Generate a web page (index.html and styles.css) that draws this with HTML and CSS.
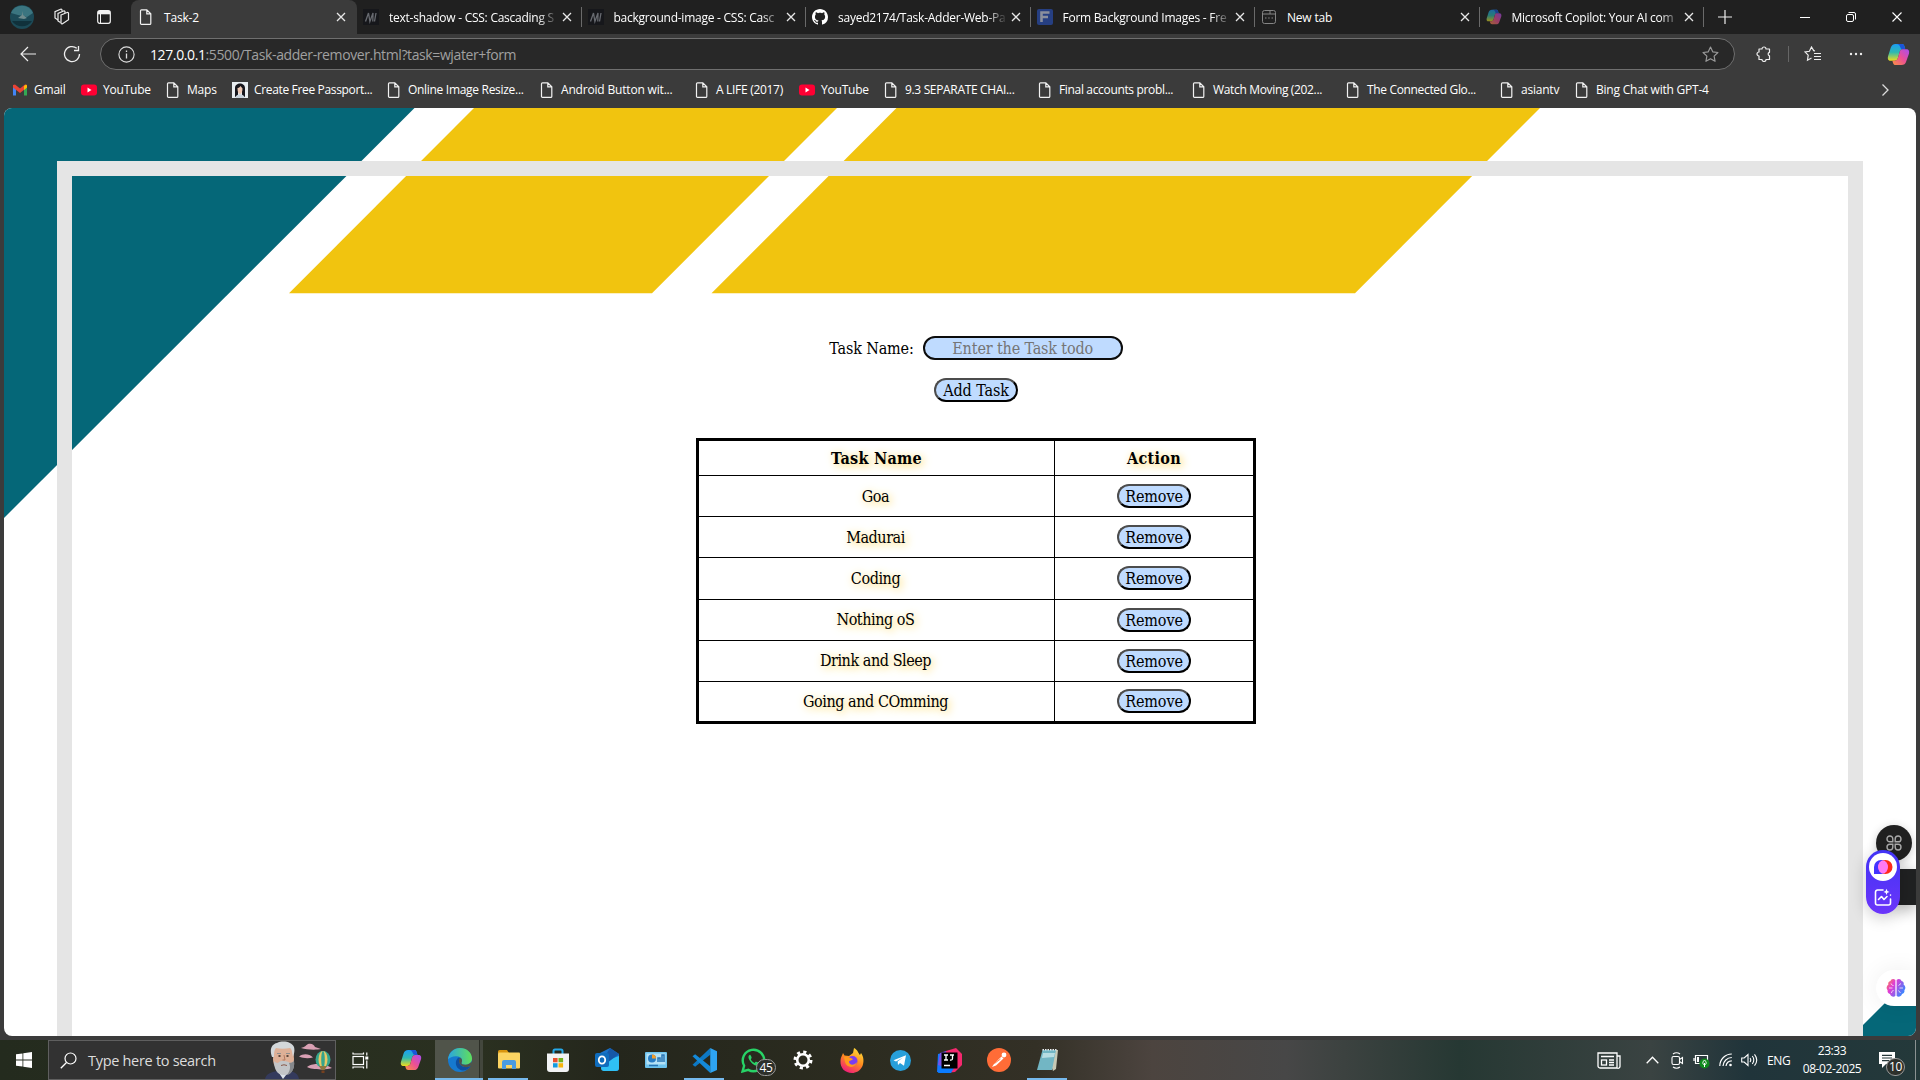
FILE: index.html
```html
<!DOCTYPE html>
<html lang="en">
<head>
<meta charset="utf-8">
<title>Task-2</title>
<link rel="stylesheet" href="styles.css">
</head>
<body>
<svg class="defs" width="0" height="0">
  <defs>
    <linearGradient id="cpA" x1="0" y1="0" x2="0" y2="1"><stop offset="0" stop-color="#1b9df5"/><stop offset=".5" stop-color="#2fb9b0"/><stop offset="1" stop-color="#f0dc1c"/></linearGradient>
    <linearGradient id="cpB" x1="1" y1="0" x2="0" y2="1"><stop offset="0" stop-color="#a84df0"/><stop offset=".5" stop-color="#ec4f95"/><stop offset="1" stop-color="#fb9140"/></linearGradient>
    <linearGradient id="edgeTop" x1="0" y1="0" x2="1" y2="0"><stop offset="0" stop-color="#2aa5e0"/><stop offset="1" stop-color="#61e05a"/></linearGradient>
    <linearGradient id="ffx" x1=".8" y1="0" x2=".3" y2="1"><stop offset="0" stop-color="#ffe23a"/><stop offset=".5" stop-color="#ff8a1e"/><stop offset="1" stop-color="#f0197c"/></linearGradient>
    <linearGradient id="brainFill" x1="0" y1="0" x2="1" y2=".6"><stop offset="0" stop-color="#ff8a3c"/><stop offset=".4" stop-color="#e13ad6"/><stop offset="1" stop-color="#3a86ff"/></linearGradient>
    <symbol id="doc" viewBox="0 0 16 16"><path d="M3.500.8h5.300l4 4v9.600a1 1 0 0 1-1 1H3.500a1 1 0 0 1-1-1V1.800a1 1 0 0 1 1-1zM8.800.8v4h4" fill="none" stroke="#f2f2f2" stroke-width="1.200"/></symbol>
    <symbol id="x" viewBox="0 0 10 10"><path d="M1 1l8 8M9 1L1 9" stroke="#e8e8e8" stroke-width="1.300"/></symbol>
    <symbol id="mdn" viewBox="0 0 16 16"><rect width="16" height="16" fill="#16171b"/><path d="M2.500 12.500L5.500 4l1.400 8.500L10 4l-.2 8.500M13 4l-1.500 8.500" fill="none" stroke="#686b71" stroke-width="1.300"/></symbol>
    <symbol id="yt" viewBox="0 0 16 16"><rect y="2.500" width="16" height="11" rx="3" fill="#ff0033"/><path d="M6.500 5.500v5L10.500 8z" fill="#fff"/></symbol>
    <symbol id="copilot" viewBox="0 0 24 24"><path d="M9 1h6.500c1.600 0 2.200.9 2.600 2.200l1 3.300h-2.600c-1.900 0-2.800 1-3.300 2.800l-1.700 6.200c-.6 2-1.700 3-3.500 3H4c-2.900 0-3.600-2.200-2.900-4.700L3.900 5C4.700 2.300 6.300 1 9 1z" fill="url(#cpA)"/><path d="M9.500 1h6c1.600 0 2.200.9 2.600 2.200l1 3.300h-2.600c-1.200 0-2-.3-2.500-1.800C13.300 2.600 12.500 1 9.500 1z" fill="#1a54d8"/><path d="M15 23H9c-1.600 0-2.300-.9-2.700-2.200l-.7-2.300H8c1.800 0 2.900-1 3.500-3l1.700-6.200c.5-1.800 1.400-2.800 3.300-2.800H20c2.900 0 3.600 2.200 2.900 4.700L20.100 19c-.8 2.700-2.400 4-5.100 4z" fill="url(#cpB)"/></symbol>
    <symbol id="star" viewBox="0 0 16 16"><path d="M8 1l2.100 4.500 4.900.6-3.600 3.400.9 4.900L8 12l-4.300 2.400.9-4.900L1 6.100l4.900-.6z" fill="none" stroke="currentColor" stroke-width="1.100" stroke-linejoin="round"/></symbol>
  </defs>
</svg>

<div class="screen">
  <header class="tabbar">
    <div class="tabtools">
      <svg width="24" height="24" viewBox="0 0 24 24"><circle cx="12" cy="12" r="12" fill="#1c4a57"/><path d="M1 8a12 12 0 0 1 22 0l-6 4-9-2z" fill="#3b7580"/><path d="M8 13l4-3 0-4 1 4 4 3-3 1z" fill="#708c8e"/><path d="M2 16h20a12 12 0 0 1-20 0z" fill="#10313b"/></svg>
      <svg width="18" height="18" viewBox="0 0 18 18" fill="none" stroke="#eee" stroke-width="1.200"><path d="M8 7l6-2.500a1 1 0 0 1 1.500.8v6.500l-6 4a1 1 0 0 1-1.500-.8z"/><path d="M12 5V3.800a1 1 0 0 0-1.400-.8L5 5.500V13l2.500 1.500"/><path d="M9 3V2a1 1 0 0 0-1.400-.8L2 3.600V10l3 2"/></svg>
      <svg width="16" height="16" viewBox="0 0 16 16"><rect x="1.700" y="1.700" width="12.600" height="12.600" rx="2" fill="none" stroke="#f2f2f2" stroke-width="1.200"/><path d="M2 2h12v3.300H2z" fill="#f2f2f2"/><path d="M4.500 5v9" stroke="#f2f2f2"/></svg>
    </div>
    <div class="tab active"><svg class="fav"><use href="#doc"/></svg><span>Task-2</span><svg class="cls"><use href="#x"/></svg></div>
    <div class="tab fade"><svg class="fav"><use href="#mdn"/></svg><span>text-shadow - CSS: Cascading S</span><svg class="cls"><use href="#x"/></svg></div>
    <div class="tab fade"><svg class="fav"><use href="#mdn"/></svg><span>background-image - CSS: Casc</span><svg class="cls"><use href="#x"/></svg></div>
    <div class="tab fade"><svg class="fav" viewBox="0 0 16 16"><path fill="#fff" d="M8 0C3.580 0 0 3.580 0 8c0 3.540 2.290 6.530 5.470 7.590.4.070.55-.17.55-.38 0-.19-.01-.82-.01-1.490-2.010.37-2.530-.49-2.690-.94-.09-.23-.48-.94-.82-1.130-.28-.15-.68-.52-.01-.53.63-.01 1.080.58 1.230.82.72 1.210 1.870.87 2.330.66.07-.52.28-.87.51-1.070-1.780-.2-3.640-.89-3.640-3.950 0-.87.31-1.590.82-2.150-.08-.2-.36-1.020.08-2.120 0 0 .67-.21 2.200.82.64-.18 1.320-.27 2-.27s1.360.09 2 .27c1.530-1.040 2.200-.82 2.200-.82.44 1.100.16 1.920.08 2.120.51.56.82 1.270.82 2.150 0 3.070-1.870 3.750-3.650 3.950.29.25.54.73.54 1.480 0 1.070-.01 1.930-.01 2.200 0 .21.15.46.55.38A8.010 8.010 0 0 0 16 8c0-4.420-3.580-8-8-8z"/></svg><span>sayed2174/Task-Adder-Web-Pa</span><svg class="cls"><use href="#x"/></svg></div>
    <div class="tab fade"><svg class="fav" viewBox="0 0 16 16"><rect width="16" height="16" rx="2" fill="#263f82"/><path d="M4.500 13V3.500h8M4.500 8H11" stroke="#8a8f9d" stroke-width="2.600" fill="none"/></svg><span>Form Background Images - Fre</span><svg class="cls"><use href="#x"/></svg></div>
    <div class="tab"><svg class="fav" viewBox="0 0 16 16" fill="none" stroke="#858585"><rect x="1.500" y="1.500" width="13" height="13" rx="2"/><path d="M1.500 5h13M9 1.500V5M4 9h1.500M7.200 9h1.500M10.500 9H12"/></svg><span>New tab</span><svg class="cls"><use href="#x"/></svg></div>
    <div class="tab fade"><svg class="fav dim"><use href="#copilot"/></svg><span>Microsoft Copilot: Your AI com</span><svg class="cls"><use href="#x"/></svg></div>
    <svg class="plus" width="14" height="14" viewBox="0 0 14 14"><path d="M7 0v14M0 7h14" stroke="#eee" stroke-width="1.200"/></svg>
    <div class="winctl">
      <svg width="10" height="10" viewBox="0 0 10 10"><path d="M0 5.500h10" stroke="#fff"/></svg>
      <svg width="10" height="10" viewBox="0 0 10 10" fill="none" stroke="#fff"><rect x=".5" y="2.500" width="7" height="7" rx="1.500"/><path d="M2.500.5H8A1.500 1.500 0 0 1 9.500 2v5.500"/></svg>
      <svg width="10" height="10" viewBox="0 0 10 10"><path d="M.5.5l9 9M9.500.5l-9 9" stroke="#fff" stroke-width="1.100"/></svg>
    </div>
  </header>

  <div class="toolbar">
    <svg class="back" width="16" height="16" viewBox="0 0 16 16"><path d="M8 1L1 8l7 7M1 8h15" fill="none" stroke="#eee" stroke-width="1.200"/></svg>
    <svg class="reload" width="18" height="18" viewBox="0 0 18 18"><path d="M16.500 9A7.500 7.500 0 1 1 13.800 3.300M15.500 1v4.500H11" fill="none" stroke="#eee" stroke-width="1.300"/></svg>
    <div class="address">
      <svg width="17" height="17" viewBox="0 0 17 17"><circle cx="8.500" cy="8.500" r="7.600" fill="none" stroke="#ddd" stroke-width="1.100"/><path d="M8.500 7.500V12.500M8.500 4.500v1.600" stroke="#ddd" stroke-width="1.300"/></svg>
      <span class="url"><b>127.0.0.1</b>:5500/Task-adder-remover.html?task=wjater+form</span>
      <svg class="addstar" width="17" height="17"><use href="#star"/></svg>
    </div>
    <div class="actions">
      <svg width="16" height="16" viewBox="0 0 16 16"><path d="M3 3h3a2 2 0 0 1 4 0h3.500v3.300a1.800 1.800 0 0 0 0 3.500V13.500H10a2 2 0 0 1-4 0H3V10a2 2 0 0 1 0-4z" fill="none" stroke="#eee" stroke-width="1.200" stroke-linejoin="round"/></svg>
      <i></i>
      <svg width="17" height="16" viewBox="0 0 17 16"><path d="M11 4.800L9.700 4.600 7.500 1 5.400 5.300 1 6l3.200 3.200-.7 5 4-2.200M10 7.500h7M10 10.500h7M10 13.500h7" fill="none" stroke="#eee" stroke-width="1.200"/></svg>
      <svg width="14" height="4" viewBox="0 0 14 4"><circle cx="2" cy="2" r="1.200" fill="#eee"/><circle cx="7" cy="2" r="1.200" fill="#eee"/><circle cx="12" cy="2" r="1.200" fill="#eee"/></svg>
      <svg width="23" height="23"><use href="#copilot"/></svg>
    </div>
  </div>

  <nav class="bookmarks">
    <a class="w69"><svg class="fav" viewBox="0 0 16 16"><path d="M1 13.500V4l3 2v7.500z" fill="#4285f4"/><path d="M12 13.500V6l3-2v9.500z" fill="#34a853"/><path d="M1 3l2-.5 5 4 5-4L15 3v2.500L8 11 1 5.500z" fill="#ea4335"/><path d="M12 4l2-1.500 1 1v2L12 8z" fill="#fbbc04"/></svg>Gmail</a>
    <a class="w84"><svg class="fav"><use href="#yt"/></svg>YouTube</a>
    <a class="w67"><svg class="fav"><use href="#doc"/></svg>Maps</a>
    <a class="w154"><svg class="fav" viewBox="0 0 16 16"><rect width="16" height="16" fill="#e8edf0"/><path d="M3 15V6c0-6 10-6 10 0v9l-3-1V6H6v8z" fill="#16161c"/><path d="M5.500 6c2 0 3-2 3-2l2 2.500C10.500 10 9.500 12 8 12s-2.500-2-2.500-6z" fill="#efc9b4"/><path d="M3.500 16c0-5 9-5 9 0z" fill="#c9d3dc"/></svg>Create Free Passport...</a>
    <a class="w153"><svg class="fav"><use href="#doc"/></svg>Online Image Resize...</a>
    <a class="w155"><svg class="fav"><use href="#doc"/></svg>Android Button wit...</a>
    <a class="w105"><svg class="fav"><use href="#doc"/></svg>A LIFE (2017)</a>
    <a class="w84"><svg class="fav"><use href="#yt"/></svg>YouTube</a>
    <a class="w154"><svg class="fav"><use href="#doc"/></svg>9.3 SEPARATE CHAI...</a>
    <a class="w154"><svg class="fav"><use href="#doc"/></svg>Final accounts probl...</a>
    <a class="w154"><svg class="fav"><use href="#doc"/></svg>Watch Moving (202...</a>
    <a class="w154"><svg class="fav"><use href="#doc"/></svg>The Connected Glo...</a>
    <a class="w75"><svg class="fav"><use href="#doc"/></svg>asiantv</a>
    <a><svg class="fav"><use href="#doc"/></svg>Bing Chat with GPT-4</a>
    <svg class="more" width="8" height="12" viewBox="0 0 8 12"><path d="M1.500.5L7 6l-5.500 5.500" fill="none" stroke="#ddd" stroke-width="1.300"/></svg>
  </nav>

  <main class="page">
    <svg class="backdrop" width="1912" height="928" viewBox="4 108 1912 928">
      <path d="M4 108H414.500L4 518z" fill="#056778"/>
      <path d="M474 108H837L652 293.300H289z" fill="#f1c40f"/>
      <path d="M896.500 108H1540L1355 293.300H711.500z" fill="#f1c40f"/>
      <path d="M1852 1036L1916 972V1036z" fill="#056778"/>
    </svg>
    <div class="frame">
      <form class="entry">
        <div class="row"><label for="task">Task Name:</label><input id="task" type="text" placeholder="Enter the Task todo"></div>
        <button class="btn add" type="button">Add Task</button>
      </form>
      <table class="tasks">
        <tr><th class="name">Task Name</th><th>Action</th></tr>
        <tr><td>Goa</td><td><button class="btn">Remove</button></td></tr>
        <tr><td>Madurai</td><td><button class="btn">Remove</button></td></tr>
        <tr><td>Coding</td><td><button class="btn">Remove</button></td></tr>
        <tr><td>Nothing oS</td><td><button class="btn">Remove</button></td></tr>
        <tr><td>Drink and Sleep</td><td><button class="btn">Remove</button></td></tr>
        <tr><td>Going and COmming</td><td><button class="btn">Remove</button></td></tr>
      </table>
    </div>

    <div class="ext-circle"><svg width="16" height="16" viewBox="0 0 16 16" fill="none" stroke="#a9a9a9" stroke-width="1.400"><path d="M6.800 6.800H3.900A2.900 2.900 0 1 1 6.800 3.900zM9.200 6.800h2.900A2.900 2.900 0 1 0 9.200 3.900zM6.800 9.200H3.900A2.900 2.900 0 1 0 6.800 12.100zM9.200 9.200h2.900A2.900 2.900 0 1 1 9.200 12.100z"/></svg></div>
    <div class="ext-bar"></div>
    <div class="ext-pill">
      <svg width="28" height="28" viewBox="0 0 28 28"><circle cx="14" cy="14" r="14" fill="#fff"/><path d="M5 21v-7a7 7 0 1 1 7 7z" fill="#4433ff"/><circle cx="16.500" cy="14" r="7" fill="#ff2a1a"/><ellipse cx="14" cy="14" rx="5" ry="6.500" fill="#ff7af5"/></svg>
      <svg width="18" height="18" viewBox="0 0 18 18" fill="none" stroke="#fff" stroke-width="1.600" stroke-linecap="round" stroke-linejoin="round"><path d="M9 2H3.500A2 2 0 0 0 1.500 4v11a2 2 0 0 0 2 2h11a2 2 0 0 0 2-2v-4M4.500 11.500l3-3 2.500 3 3-3"/><path d="M12.500.8l.9 2.200 2.200.9-2.200.9-.9 2.200-.9-2.200-2.200-.9 2.200-.9z" fill="#fff" stroke="none"/><path d="M16.500 7v.1"/></svg>
    </div>
    <div class="ext-brain"><svg width="20" height="20" viewBox="0 0 20 20"><path d="M9.400 2C7.500.2 5 1 4.500 3 2.600 3.300 1.800 5 2.400 6.600.4 7.800 0 10.600 1.600 12.300c-.4 2 .8 3.500 2.400 3.700.8 2.800 4 3.500 5.400 1.800zM10.600 2c1.900-1.800 4.400-1 4.900 1 1.900.3 2.700 2 2.100 3.600 2 1.200 2.400 4 .8 5.700.4 2-.8 3.500-2.400 3.700-.8 2.800-4 3.500-5.400 1.800z" fill="url(#brainFill)"/><path d="M3 10h3.500M5 5.500c.4 1.300 1.300 2 2.500 2M5.500 15c0-1.500.8-2.300 2-2.500M17 10h-3.500M15 5.500l-2.500 2M14.500 15l-2-2.500" fill="none" stroke="#ffffffbb" stroke-width="1"/></svg></div>
  </main>

  <footer class="taskbar">
    <div class="cell start"><svg width="16" height="16" viewBox="0 0 16 16"><path d="M0 2.300L6.500 1.400V7.600H0zM7.300 1.300L16 0v7.600H7.300zM0 8.400h6.500v6.200L0 13.700zM7.300 8.400H16V16l-8.700-1.300z" fill="#fff"/></svg></div>
    <div class="search">
      <svg width="17" height="17" viewBox="0 0 17 17"><circle cx="10.500" cy="6.500" r="5.500" fill="none" stroke="#fff" stroke-width="1.200"/><path d="M6.500 10.500L.8 16.200" stroke="#fff" stroke-width="1.300"/></svg>
      <span>Type here to search</span>
      <svg class="art" width="70" height="38" viewBox="0 0 70 38">
        <path d="M0 38c1-5 6-7 12-8h13c5 1 8 3 9 8z" fill="#343a5c"/><path d="M12 29l6 9 7-9z" fill="#dde3ea"/>
        <path d="M9 6h19l1 12c0 8-4 12-10 12S8 26 8 18z" fill="#deb097"/>
        <path d="M7 16C4 8 7 3 12 2c6-3 15-1 17 4 1 4 0 7-1 10-1-5-1-8-3-9-5 1-10 1-14 0-2 2-2 5-2 9z" fill="#d3d7da"/>
        <path d="M9 20c1 1 2 2 4 2 2-2 4-2.500 6-2s4 0 6 2c2 0 3-1 4-2 1 8-3 14-10 14S9 28 9 20z" fill="#c3c5c7"/><path d="M24 22c2 0 4-1 5-2 1 7-2 13-7 14 3-4 4-8 2-12z" fill="#85888c"/><path d="M16 24.500q3-1.500 6 0" stroke="#8a5a4a" fill="none"/>
        <path d="M12 12.500h4M21 12.500h4" stroke="#8f8f8f" stroke-width="1.200"/><path d="M13.500 15h2M21.500 15h2" stroke="#33241f" stroke-width="1.600"/><path d="M19 14l1 5h-2.500" stroke="#b5795e" fill="none"/>
        <path d="M36 7c4-1 4-2 7-4 4-1 6 1 7 3l6 2c-4 1-14 1-20-1zM34 15.500c4-3 10-3 14 1-4 1-10 1-14-1zM42 26c4-3 8-3 11-3h6l8 4c-4 2-21 2-25-1z" fill="#d9a0b4"/>
        <ellipse cx="58" cy="18.500" rx="7.500" ry="8.500" fill="#35a58d"/><ellipse cx="58" cy="18.500" rx="4.500" ry="8.500" fill="#e7c765"/><ellipse cx="58" cy="18.500" rx="1.800" ry="8.500" fill="#35a58d"/><path d="M54 25l2.500 4h3l2.500-4z" fill="#8d7740"/><path d="M56.500 29.500h3v2.500h-3z" fill="#76401f"/>
      </svg>
    </div>
    <div class="apps">
      <div class="cell"><svg width="17" height="17" viewBox="0 0 17 17" fill="none" stroke="#fff" stroke-width="1.200"><rect x="1" y="4.500" width="10.500" height="8"/><path d="M1 .5V2h10.500V.5M1 16.500V15h10.500v1.500M14.800.5v3M14.800 8.500v8"/><path d="M13.300 4.500h3v3h-3z" fill="#fff" stroke="none"/></svg></div>
      <div class="cell"><svg width="22" height="22"><use href="#copilot"/></svg></div>
      <div class="cell on"><svg width="24" height="24" viewBox="0 0 24 24"><circle cx="12" cy="12" r="12" fill="#1679cf"/><path d="M0 11.500C.6 4.500 6 0 12 0c7 0 12 5 12 10.500 0 4-3 6.300-6.800 6.300-2.700 0-4.200-1-3.600-2.300 1.400-2.500 0-6-5-6.300C4.800 8 1.500 9.300 0 11.500z" fill="url(#edgeTop)"/><path d="M10.500 9.500c-4 3-3.500 10 2 12.500 4 1.600 8-.4 10.300-4-3.500 1.800-8.300 1.500-10.600-1.500C10.500 14 10.500 11.500 12.500 10z" fill="#0f4f9f"/><path d="M12.300 9.800c2 1.200 2.100 3.200 1.300 4.700-.6 1.300.9 2.300 3.600 2.300 2.800 0 5.300-1.400 6.300-3.600l.5 3-1.300 1.900c-3.500 1.800-8.200 1.400-10.500-1.600-1.700-2.300-1.700-5.200.1-6.700z" fill="#50544a"/></svg></div>
      <div class="cell open"><svg width="22" height="20" viewBox="0 0 22 20"><path d="M0 1.500A1.500 1.500 0 0 1 1.500 0H9l2 3H0z" fill="#d9950f"/><rect y="2.500" width="22" height="16" rx="1" fill="#fcd462"/><path d="M4 19v-7a2 2 0 0 1 2-2h10a2 2 0 0 1 2 2v7h-4v-4H8v4z" fill="#4a9be0"/></svg></div>
      <div class="cell"><svg width="24" height="24" viewBox="0 0 24 24"><path d="M7.500 6V3a1.500 1.500 0 0 1 1.500-1.500h6A1.500 1.500 0 0 1 16.500 3v3" fill="none" stroke="#25a9ea" stroke-width="2"/><path d="M1 5.500h22V21a3 3 0 0 1-3 3H4a3 3 0 0 1-3-3z" fill="#f2f3f4"/><path d="M7 10h4.600v4.300H7z" fill="#e8502e"/><path d="M12.500 10h4.600v4.300h-4.600z" fill="#74b21c"/><path d="M7 15.200h4.600v4.300H7z" fill="#119be0"/><path d="M12.500 15.200h4.600v4.300h-4.600z" fill="#f7b40b"/></svg></div>
      <div class="cell"><svg width="24" height="24" viewBox="0 0 24 24"><path d="M5 5l10-5 9 6v14a3 3 0 0 1-3 3H8z" fill="#1872c9"/><path d="M7 14l17-6v12a3 3 0 0 1-3 3H9a3 3 0 0 1-3-3z" fill="#2fc0f5"/><path d="M15 0l9 6-12 9V5z" fill="#1658a8"/><rect y="5" width="14" height="14" rx="2" fill="#0f6cbd"/><ellipse cx="7" cy="12" rx="3.200" ry="3.700" fill="none" stroke="#fff" stroke-width="1.800"/></svg></div>
      <div class="cell"><svg width="22" height="16" viewBox="0 0 22 16"><rect width="22" height="16" rx="1" fill="#6dc3ee"/><rect x="1.500" y="1.500" width="19" height="11" fill="#b4e1f6"/><circle cx="7" cy="6.500" r="4" fill="#277cc4"/><path d="M7 6.500V2.500a4 4 0 0 1 4 4z" fill="#f29d2c"/><path d="M13 10V6h2v4M17 10V3h2v7M4 13.500h9" stroke="#2674b5" stroke-width="1.500" fill="none"/></svg></div>
      <div class="cell open"><svg width="25" height="25" viewBox="0 0 24 24"><path d="M17.500 0v6.500L3 18 .5 16z" fill="#0d78c4"/><path d="M.5 8L3 6l14.500 11.500V24z" fill="#1489d8"/><path d="M17.500 0L24 3v18l-6.500 3z" fill="#2ea4f3"/></svg></div>
      <div class="cell"><svg width="25" height="25" viewBox="0 0 24 24"><path d="M1.500 22.500L3 17A10.300 10.300 0 1 1 7 21z" fill="none" stroke="#27d366" stroke-width="2.300"/><path d="M8.500 6.500c-3 1.500-.5 6 2.500 8.500 3 2.500 6 2.500 6.500 0 .2-1-3-2.300-3.500-1.700l-1 1c-1.500-.5-3-2-3.600-3.500l.8-1.100c.3-.6-1-3.400-1.700-3.200z" fill="#27d366"/></svg><em class="badge">45</em></div>
      <div class="cell"><svg width="20" height="20" viewBox="0 0 20 20"><circle cx="10" cy="10" r="5.800" fill="none" stroke="#fff" stroke-width="2.600"/><circle cx="10" cy="10" r="8" fill="none" stroke="#fff" stroke-width="3" stroke-dasharray="3.140 3.140"/></svg></div>
      <div class="cell"><svg width="24" height="25" viewBox="0 0 24 25"><path d="M3 5l1.500 2.500L9 8l4-3 1-5c4 2 4 5 6 7l1-2c3 4 3 9 1.500 13C20 23 16 25 12 25 5 25 0 20 .5 13 .7 9 2 8 3 5z" fill="url(#ffx)"/><circle cx="12.500" cy="13" r="5" fill="#7a3df0"/><path d="M4 9c4-1 6 1 9 2-1 2-4 1-4 3 1 4 6 3 8 0-1 6-10 7-12 0z" fill="#ff9a1c"/></svg></div>
      <div class="cell"><svg width="21" height="21" viewBox="0 0 21 21"><circle cx="10.500" cy="10.500" r="10.500" fill="#279fda"/><path d="M3.500 10.300L16 5.300l-2 10.400-4-2.800-2 2-.4-3.300L13 7.500l-7 4z" fill="#fff"/></svg></div>
      <div class="cell"><svg width="25" height="25" viewBox="0 0 25 25"><path d="M1 6l8-2 3 8-5 13-7-1z" fill="#1277ff"/><path d="M9 3l10-3 6 6v11l-7 7L7 25z" fill="#f5286e"/><path d="M9 3l-6 2-2 12 10 3z" fill="#7b50e8"/><path d="M3 20h14l-3 5H1z" fill="#0b7cff"/><rect x="4.500" y="4.500" width="16" height="16" fill="#000"/><path d="M7 7h4M9 7v5M7 12h4M13 7h4M15.500 7v3.500q0 1.800-2.500 1.500M7 17.500h6" stroke="#fff" stroke-width="1.300" fill="none"/></svg></div>
      <div class="cell"><svg width="24" height="24" viewBox="0 0 24 24"><circle cx="12" cy="12" r="12" fill="#ff6c37"/><path d="M5 19l2-3 7.500-7.500 2 2L9 17.500z" fill="#fff"/><circle cx="17" cy="7" r="2.400" fill="#fff"/><path d="M7.500 15.500l6-4.500" stroke="#ff6c37" stroke-width=".8"/></svg></div>
      <div class="cell open"><svg width="23" height="23" viewBox="0 0 23 23"><path d="M7 1h15l-2 19-3 2-1-3z" fill="#c7c9b5"/><path d="M6.500 1H20l-4 20H1z" fill="#72b6c4"/><path d="M7 4h12l-1 4-12 1z" fill="#b7dde2"/><path d="M6.500.8H20.500" stroke="#e9eef0" stroke-width="1.500" stroke-dasharray="1.500 1"/></svg></div>
    </div>
    <div class="tray">
      <svg class="t-news" width="24" height="17" viewBox="0 0 24 17" fill="none" stroke="#fff" stroke-width="1.300"><path d="M20 16H3a2 2 0 0 1-2-2V1h19zM20 4h3v10a2 2 0 0 1-3 2M4 4.500h13M12 8h5M12 10.500h5M12 13h5"/><rect x="4.500" y="8" width="5" height="5"/></svg>
      <svg class="t-caret" width="13" height="8" viewBox="0 0 13 8"><path d="M.7 7.300L6.500 1.300l5.800 6" fill="none" stroke="#fff" stroke-width="1.300"/></svg>
      <svg class="t-meet" width="13" height="17" viewBox="0 0 13 17" fill="none" stroke="#fff" stroke-width="1.100"><rect x="1" y="4.500" width="7.500" height="8" rx="1.500"/><path d="M8.500 7.500l3-2v6l-3-2M2 2q3.500-2.500 7 0M2 15q3.500 2.500 7 0"/></svg>
      <svg class="t-batt" width="17" height="17" viewBox="0 0 17 17"><path d="M2.500 3.500h12v8h-12zM1 6v3" fill="none" stroke="#fff" stroke-width="1.200"/><path d="M4 5h2v5H4z" fill="#fff"/><circle cx="11.500" cy="11.500" r="5" fill="#0f8a1c"/><path d="M11.500 8c2.200 2.200 2.200 4 0 5.200-2.200-1.200-2.200-3 0-5.200zM11.500 11v4" fill="none" stroke="#fff"/></svg>
      <svg class="t-wifi" width="14" height="14" viewBox="0 0 14 14" fill="none" stroke="#fff"><path d="M.8 13A12 12 0 0 1 12.800 1M4 13A9 9 0 0 1 12.800 4.500M7 13a6 6 0 0 1 5.800-5.200" stroke-width="1.200"/><circle cx="11.500" cy="12" r="1.300" fill="#fff" stroke="none"/></svg>
      <svg class="t-vol" width="17" height="14" viewBox="0 0 17 14" fill="none" stroke="#fff" stroke-width="1.100"><path d="M.7 5h2.500L7 1.500v11L3.200 9H.7zM9 5q1.500 2 0 4M11.300 3q3 4 0 8M13.500 1.300q4.500 5.700 0 11.400"/></svg>
      <span class="t-lang">ENG</span>
      <span class="t-clock">23:33<br>08-02-2025</span>
      <div class="t-note"><svg width="16" height="17" viewBox="0 0 16 17"><path d="M0 0h16v12h-9l-4 4v-4H0z" fill="#fff"/><path d="M3 3.300h10M3 6h10M3 8.700h7" stroke="#26383a" stroke-width="1.200"/></svg><em class="badge">10</em></div>
    </div>
  </footer>
</div>
</body>
</html>
```
FILE: styles.css
```css
* { box-sizing: border-box; }
body { margin: 0; background: #3b3b3b; font-family: "Open Sans", "Noto Sans", sans-serif; }
.defs { position: absolute; }
.screen { width: 1920px; height: 1080px; display: flex; flex-direction: column; overflow: hidden; }
svg { display: block; flex: none; }
.fav { width: 16px; height: 16px; flex: none; }
.dim { opacity: .6; }

/* Tab strip */
.tabbar { height: 34px; background: #202020; display: flex; align-items: center; color: #fff; font-size: 12px; letter-spacing: -.2px; }
.tabtools { width: 131px; padding-left: 10px; display: flex; align-items: center; gap: 19px; }
.tabtools svg:last-child { margin-left: 6px; }
.tab { width: 224.500px; height: 34px; padding: 0 10px 0 6px; display: flex; align-items: center; position: relative; }
.tab span { flex: 1; margin: 0 0 0 10px; white-space: nowrap; }
.tab.fade span { -webkit-mask-image: linear-gradient(90deg, #000 86%, transparent 98%); mask-image: linear-gradient(90deg, #000 86%, transparent 98%); letter-spacing: -.25px; }
.tab .cls { width: 10px; height: 10px; }
.tab:not(.active)::after { content: ""; position: absolute; right: 0; top: 7px; width: 1px; height: 20px; background: #6a6a6a; }
.tab.active { width: 226px; padding: 0 11px 0 7px; background: #3b3b3b; border-radius: 8px 8px 0 0; }
.plus { margin-left: 14px; }
.winctl { margin-left: auto; padding-right: 18px; display: flex; gap: 36px; }

/* Toolbar */
.toolbar { height: 40px; display: flex; align-items: center; }
.back { margin-left: 20px; }
.reload { margin-left: 27px; }
.address { width: 1635px; height: 32px; margin-left: 19px; padding: 0 15px 0 17px; display: flex; align-items: center; background: #282828; border: 1px solid #6f6f6f; border-radius: 16px; }
.url { margin-left: 15px; font-size: 14px; letter-spacing: -.39px; color: #a0a0a0; }
.url b { font-weight: 400; color: #fff; }
.addstar { margin-left: auto; color: #9a9a9a; }
.actions { display: flex; align-items: center; margin-left: 21px; }
.actions i { width: 1px; height: 16px; background: #666; margin: 0 15px 0 16px; }
.actions svg:nth-of-type(3) { margin: 0 24px 0 28px; }

/* Bookmarks */
.bookmarks { height: 34px; padding: 0 31px 3px 12px; display: flex; align-items: center; color: #fff; font-size: 12px; letter-spacing: -.22px; }
.bookmarks a { display: flex; align-items: center; gap: 6px; white-space: nowrap; flex: none; width: 154px; }
.bookmarks .w67 { width: 67px; }
.bookmarks .w69 { width: 69px; }
.bookmarks .w75 { width: 75px; }
.bookmarks .w84 { width: 84px; }
.bookmarks .w105 { width: 105px; letter-spacing: -.3px; }
.bookmarks .w153 { width: 153px; letter-spacing: -.3px; }
.bookmarks .w155 { width: 155px; letter-spacing: -.18px; }
.bookmarks .w154 { letter-spacing: -.34px; }
.bookmarks .more { margin-left: auto; }

/* Page */
.page { position: relative; width: 1912px; height: 928px; margin-left: 4px; border-radius: 8px; overflow: hidden; background: #fff; padding: 53px 53px 0; font-family: "DejaVu Serif Condensed", "DejaVu Serif", serif; font-size: 16px; }
.backdrop { position: absolute; inset: 0; }
.frame { position: relative; height: 900px; border: 15px solid #e5e5e5; border-bottom: 0; padding: 160px 0 0 32px; display: flex; flex-direction: column; align-items: center; }
.entry { display: flex; flex-direction: column; align-items: center; letter-spacing: -.15px; }
.row { display: flex; align-items: center; gap: 9px; }
.entry input { width: 200px; height: 24px; padding: 0 6px; border: 2px solid #0c0c0c; border-radius: 12px; background: #bfdbff; font: inherit; letter-spacing: -.15px; text-align: center; }
.entry input::placeholder { color: #757575; opacity: 1; }
.btn { height: 24px; width: 74px; padding: 1px 0 0; border: 2px solid; border-color: #4c4c4c #000 #000 #4c4c4c; border-radius: 12px; background: #bfdbff; color: #000; font: inherit; letter-spacing: -.1px; display: inline-block; vertical-align: middle; line-height: 19px; }
.add { width: 84px; margin-top: 18px; }
.tasks { margin-top: 36px; width: 560px; height: 286px; border-collapse: collapse; border: 3px solid #000; table-layout: fixed; text-align: center; }
.tasks th, .tasks td { border: 1px solid #000; padding: 0; height: 41px; text-shadow: 2px 2px 8px #ffcf40; letter-spacing: -.45px; }
.tasks td:first-child { padding-right: 2px; }
.tasks th { height: 36px; letter-spacing: .3px; }
.tasks .name { width: 357px; }
.tasks .btn { text-shadow: none; }

/* Extension widgets floating over the page edge */
.ext-circle, .ext-bar, .ext-pill, .ext-brain { position: absolute; }
.ext-circle { left: 1872px; top: 717px; width: 36px; height: 36px; border-radius: 50%; background: #202020; display: grid; place-items: center; box-shadow: 0 2px 10px #0003; }
.ext-bar { left: 1892px; top: 761px; width: 20px; height: 36px; background: #202122; box-shadow: 0 4px 16px #0005; }
.ext-pill { left: 1862px; top: 742px; width: 34px; height: 64px; border-radius: 17px; background: linear-gradient(#4133f5, #6b35fa); padding-top: 3px; display: flex; flex-direction: column; align-items: center; gap: 7px; box-shadow: 0 4px 16px #0003; }
.ext-brain { left: 1872px; top: 862px; width: 40px; height: 36px; border-radius: 18px 0 0 18px; background: #fff; padding: 8px 10px; box-shadow: 0 0 24px #0001; }

/* Taskbar */
.taskbar { height: 40px; margin-top: 4px; display: flex; background: linear-gradient(90deg, #242b1e, #2a3020 25%, #24261c 32%, #2c2c20 45%, #333026 54%, #4c443f 60%, #474747 67%, #3c4240 70%, #263833 76%, #3a4342 86%, #20343a 91%, #24393a); color: #fff; }
.cell { position: relative; width: 49px; display: grid; place-items: center; }
.start { width: 48px; }
.search { width: 288px; border: 1px solid #5f5f5f; background: #323232; display: flex; align-items: center; padding-left: 11px; font-size: 14.500px; letter-spacing: -.3px; color: #ddd; }
.search span { margin-left: 11px; white-space: nowrap; }
.search .art { margin-left: auto; }
.apps { display: flex; }
.apps .cell:first-child { width: 48px; margin-right: 2px; }
.cell.open::after, .cell.on::after { content: ""; position: absolute; left: 4px; right: 5px; bottom: 0; height: 2px; background: #76b9ed; }
.cell.on { background: linear-gradient(90deg, #50544a 44px, #2b2e26 44px, #2b2e26 45px, #43473d 45px, #43473d 48px, transparent 48px); }
.cell.on::after { left: 0; right: 1px; }
.badge { position: absolute; left: 27px; top: 19px; width: 20px; height: 17px; border-radius: 9px; border: 1px solid #999; background: #2d302b; font: 12px/15px "Open Sans", sans-serif; text-align: center; color: #fff; letter-spacing: -.3px; }
.tray { margin-left: auto; padding-right: 4px; display: flex; align-items: center; font-size: 12px; letter-spacing: -.4px; }
.t-caret { margin-left: 25px; }
.t-meet { margin-left: 12px; }
.t-batt { margin-left: 9px; }
.t-wifi { margin-left: 9px; }
.t-vol { margin-left: 8px; }
.t-lang { width: 24px; margin-left: 9px; }
.t-clock { width: 60px; margin-left: 11px; line-height: 18px; text-align: center; white-space: nowrap; }
.t-note { position: relative; width: 54px; height: 40px; padding: 12px 0 0 17px; border-right: 1px solid #8a9292; }
.t-note .badge { left: 24px; top: 18px; width: 19px; height: 18px; line-height: 16px; }
```
